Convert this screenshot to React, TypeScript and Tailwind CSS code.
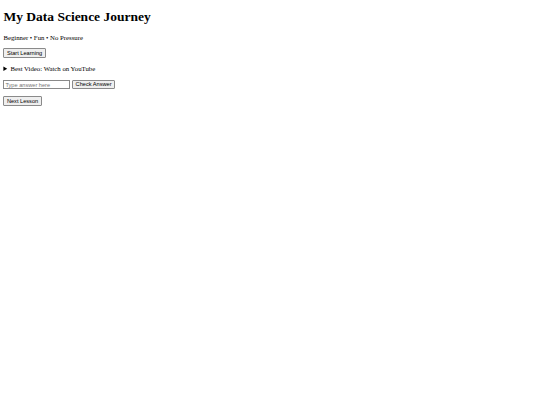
import React, { useState } from "react";

/* Browser-default page, shown at 540/1280 scale (~0.42) */
const btn =
  "rounded-[1px] border border-[#8a8a8a] bg-[#efefef] px-[2.5px] py-[0.5px] font-['Liberation_Sans',Arial,sans-serif] text-[5.63px] leading-[1.15] text-black align-middle";

export default function App() {
  const [answer, setAnswer] = useState("");

  return (
    <div className="min-h-[405px] bg-white px-[3.4px] pt-px font-['Liberation_Serif','Times_New_Roman',serif] text-[6.75px] leading-[1.15] text-black">
      <h1 className="mb-[9.05px] mt-[8.05px] text-[13.5px] font-bold leading-[1.15]">My Data Science Journey</h1>
      <p className="my-[6.75px]">Beginner • Fun • No Pressure</p>

      <p className="my-[6.75px]">
        <button className={btn}>Start Learning</button>
      </p>

      <details className="pt-[1px]">
        <summary className="cursor-pointer">Best Video: Watch on YouTube</summary>
      </details>

      <p className="my-[6.75px]">
        <input
          value={answer}
          onChange={(e) => setAnswer(e.target.value)}
          placeholder="Type answer here"
          className="w-[67px] border border-[#8a8a8a] bg-white px-[1px] py-[0.4px] align-middle font-['Liberation_Sans',Arial,sans-serif] text-[5.63px] leading-[1.15] placeholder:text-[#757575]"
        />{" "}
        <button className={btn}>Check Answer</button>
      </p>

      <p className="my-[6.75px]">
        <button className={btn}>Next Lesson</button>
      </p>
    </div>
  );
}
